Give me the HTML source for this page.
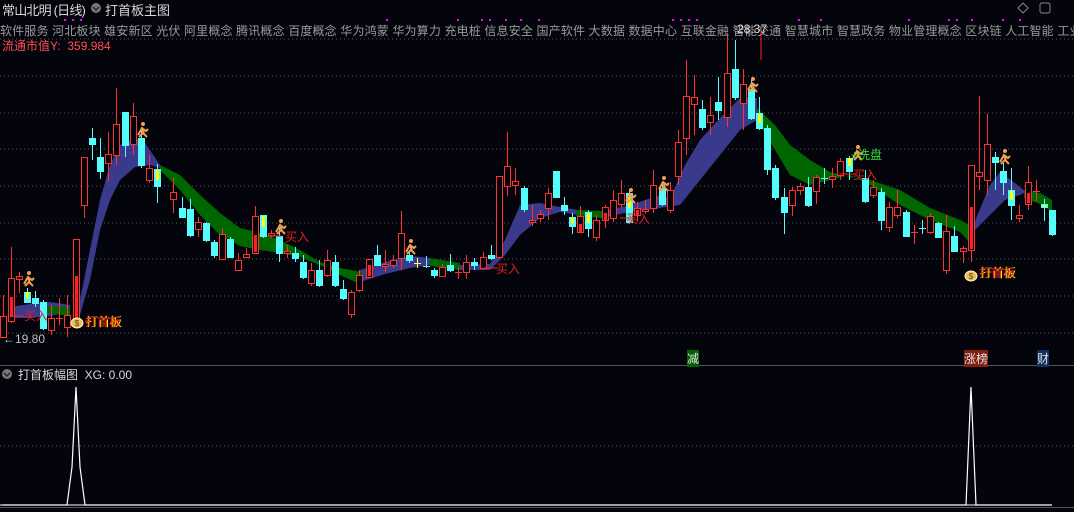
<!DOCTYPE html>
<html><head><meta charset="utf-8"><style>
html,body{margin:0;padding:0;background:#04040d;width:1074px;height:512px;overflow:hidden;font-family:"Liberation Sans","Noto Sans CJK SC",sans-serif}
svg{position:absolute;left:0;top:0}
.t{position:absolute;white-space:nowrap}
.r{stroke:#ff3232;stroke-width:1;fill:#04040d}
.rf{fill:#ff2020}
.c{stroke:#54fcfc;fill:#54fcfc}
.y{fill:#ffff00}
.g{stroke:#555;stroke-width:1;stroke-dasharray:1 3}
</style></head><body>
<svg width="1074" height="512" xmlns="http://www.w3.org/2000/svg">
<g class="g">
<line x1="0" y1="39" x2="1074" y2="39"/><line x1="0" y1="76" x2="1074" y2="76"/><line x1="0" y1="113" x2="1074" y2="113"/><line x1="0" y1="149" x2="1074" y2="149"/><line x1="0" y1="186" x2="1074" y2="186"/><line x1="0" y1="223" x2="1074" y2="223"/><line x1="0" y1="259" x2="1074" y2="259"/><line x1="0" y1="296" x2="1074" y2="296"/><line x1="0" y1="333" x2="1074" y2="333"/><line x1="0" y1="446" x2="1074" y2="446"/>
</g>
<line x1="0" y1="365.5" x2="1074" y2="365.5" stroke="#555"/>
<line x1="0" y1="507.5" x2="1074" y2="507.5" stroke="#555"/>
<g fill="#3a3a8c">
<polygon points="10,307 30,304 50,302 70,305 70,312 50,316 30,318 10,318"/>
<polygon points="75,320 80,300 90,250 100,200 110,165 120,145 135,138 145,143 160,165 160,168 150,165 135,167 120,180 110,200 100,230 90,280 80,315"/>
<polygon points="360,270 385,262 410,256 430,258 430,265 410,268 385,274 360,282"/>
<polygon points="460,265 490,264 505,240 520,205 540,203 560,207 578,210 578,215 560,212 540,218 520,235 505,255 490,270 460,270"/>
<polygon points="600,212 630,205 660,195 670,198 685,165 700,140 720,118 740,98 757,98 757,120 740,130 720,155 700,180 680,205 660,208 630,212 600,218"/>
<polygon points="972,228 990,185 1000,172 1015,183 1026,192 1020,195 1005,200 990,215 975,230"/>
</g>
<g fill="#006600">
<polygon points="47,306 70,307 70,316 47,313"/>
<polygon points="160,165 180,175 200,195 220,213 240,228 260,233 280,240 300,250 320,262 340,268 362,272 362,285 340,275 320,265 300,257 280,253 260,250 240,246 220,235 200,215 180,190 160,170"/>
<polygon points="430,258 460,263 460,270 430,266"/>
<polygon points="576,210 602,211 602,218 576,216"/>
<polygon points="757,108 775,125 790,145 810,160 830,172 850,177 870,180 900,190 930,208 960,220 972,226 972,245 960,232 930,220 900,205 870,185 850,175 830,180 810,185 790,175 775,150 757,120"/>
<polygon points="1024,190 1040,193 1052,200 1052,212 1040,204 1024,198"/>
</g>
<g>
<line class="r" x1="3.5" y1="295" x2="3.5" y2="338"/><rect class="r" x="0.5" y="316.5" width="6" height="21"/>
<line class="r" x1="11.5" y1="247" x2="11.5" y2="323"/><rect class="r" x="8.5" y="278.5" width="6" height="43"/><rect class="rf" x="10" y="297" width="3" height="20"/>
<line class="r" x1="19.5" y1="272" x2="19.5" y2="293"/><rect class="r" x="16.5" y="276.5" width="6" height="3"/>
<line class="c" x1="27.5" y1="288" x2="27.5" y2="303"/><rect class="c" x="24.5" y="292.5" width="6" height="10"/><rect class="y" x="26" y="292" width="3" height="6"/>
<line class="c" x1="35.5" y1="291" x2="35.5" y2="307"/><rect class="c" x="32.5" y="298.5" width="6" height="5"/>
<line class="c" x1="43.5" y1="300" x2="43.5" y2="330"/><rect class="c" x="40.5" y="302.5" width="6" height="26"/>
<line class="r" x1="51.5" y1="305" x2="51.5" y2="335"/><rect class="r" x="48.5" y="318.5" width="6" height="12"/>
<line class="r" x1="59.5" y1="298" x2="59.5" y2="325"/><line class="r" x1="56" y1="318.5" x2="63" y2="318.5"/>
<line class="r" x1="67.5" y1="295" x2="67.5" y2="337"/><rect class="r" x="64.5" y="315.5" width="6" height="12"/>
<rect class="r" x="73.5" y="239.5" width="6" height="83"/><rect class="rf" x="75" y="276" width="3" height="44"/>
<line class="r" x1="84.5" y1="157" x2="84.5" y2="218"/><rect class="r" x="81.5" y="157.5" width="6" height="48"/>
<line class="c" x1="92.5" y1="128" x2="92.5" y2="160"/><rect class="c" x="89.5" y="138.5" width="6" height="6"/>
<line class="c" x1="100.5" y1="138" x2="100.5" y2="179"/><rect class="c" x="97.5" y="157.5" width="6" height="14"/>
<line class="r" x1="108.5" y1="132" x2="108.5" y2="181"/><rect class="r" x="105.5" y="154.5" width="6" height="9"/>
<line class="r" x1="116.5" y1="88" x2="116.5" y2="165"/><rect class="r" x="113.5" y="124.5" width="6" height="31"/>
<line class="c" x1="125.5" y1="112" x2="125.5" y2="157"/><rect class="c" x="122.5" y="112.5" width="6" height="33"/>
<line class="r" x1="133.5" y1="103" x2="133.5" y2="155"/><rect class="r" x="130.5" y="116.5" width="6" height="28"/>
<line class="c" x1="141.5" y1="128" x2="141.5" y2="168"/><rect class="c" x="138.5" y="138.5" width="6" height="27"/>
<line class="r" x1="149.5" y1="155" x2="149.5" y2="183"/><rect class="r" x="146.5" y="168.5" width="6" height="12"/>
<line class="c" x1="157.5" y1="164" x2="157.5" y2="203"/><rect class="c" x="154.5" y="169.5" width="6" height="17"/><rect class="y" x="156" y="170" width="3" height="10"/>
<line class="r" x1="173.5" y1="178" x2="173.5" y2="213"/><rect class="r" x="170.5" y="192.5" width="6" height="7"/>
<line class="c" x1="182.5" y1="197" x2="182.5" y2="217"/><rect class="c" x="179.5" y="208.5" width="6" height="9"/>
<line class="c" x1="190.5" y1="199" x2="190.5" y2="237"/><rect class="c" x="187.5" y="209.5" width="6" height="26"/>
<line class="r" x1="198.5" y1="217" x2="198.5" y2="237"/><rect class="r" x="195.5" y="222.5" width="6" height="7"/>
<line class="c" x1="206.5" y1="222" x2="206.5" y2="242"/><rect class="c" x="203.5" y="223.5" width="6" height="17"/>
<line class="c" x1="214.5" y1="240" x2="214.5" y2="258"/><rect class="c" x="211.5" y="242.5" width="6" height="13"/>
<line class="r" x1="222.5" y1="228" x2="222.5" y2="259"/><rect class="r" x="219.5" y="234.5" width="6" height="25"/>
<line class="c" x1="230.5" y1="237" x2="230.5" y2="258"/><rect class="c" x="227.5" y="239.5" width="6" height="18"/>
<line class="r" x1="238.5" y1="253" x2="238.5" y2="270"/><rect class="r" x="235.5" y="260.5" width="6" height="10"/>
<line class="r" x1="246.5" y1="248" x2="246.5" y2="258"/><rect class="r" x="243.5" y="254.5" width="6" height="3"/>
<line class="r" x1="255.5" y1="206" x2="255.5" y2="254"/><rect class="r" x="252.5" y="216.5" width="6" height="37"/><rect class="rf" x="254" y="235" width="3" height="17"/>
<line class="c" x1="263.5" y1="215" x2="263.5" y2="238"/><rect class="c" x="260.5" y="215.5" width="6" height="21"/><rect class="y" x="262" y="216" width="3" height="11"/>
<line class="r" x1="271.5" y1="230" x2="271.5" y2="238"/><rect class="r" x="268.5" y="233.5" width="6" height="2"/>
<line class="c" x1="279.5" y1="228" x2="279.5" y2="262"/><rect class="c" x="276.5" y="236.5" width="6" height="17"/>
<line class="r" x1="287.5" y1="245" x2="287.5" y2="258"/><rect class="r" x="284.5" y="251.5" width="6" height="2"/>
<line class="c" x1="295.5" y1="247" x2="295.5" y2="262"/><rect class="c" x="292.5" y="253.5" width="6" height="5"/>
<line class="c" x1="303.5" y1="255" x2="303.5" y2="279"/><rect class="c" x="300.5" y="262.5" width="6" height="15"/>
<line class="r" x1="311.5" y1="263" x2="311.5" y2="286"/><rect class="r" x="308.5" y="270.5" width="6" height="13"/>
<line class="c" x1="319.5" y1="260" x2="319.5" y2="287"/><rect class="c" x="316.5" y="270.5" width="6" height="15"/>
<line class="r" x1="327.5" y1="250" x2="327.5" y2="277"/><rect class="r" x="324.5" y="260.5" width="6" height="15"/>
<line class="c" x1="335.5" y1="255" x2="335.5" y2="287"/><rect class="c" x="332.5" y="262.5" width="6" height="23"/>
<line class="c" x1="343.5" y1="280" x2="343.5" y2="300"/><rect class="c" x="340.5" y="289.5" width="6" height="9"/>
<line class="r" x1="351.5" y1="290" x2="351.5" y2="318"/><rect class="r" x="348.5" y="292.5" width="6" height="22"/>
<line class="r" x1="359.5" y1="270" x2="359.5" y2="292"/><rect class="r" x="356.5" y="275.5" width="6" height="15"/>
<line class="r" x1="369.5" y1="259" x2="369.5" y2="277"/><rect class="r" x="366.5" y="259.5" width="6" height="18"/><rect class="rf" x="368" y="265" width="3" height="11"/>
<line class="c" x1="377.5" y1="245" x2="377.5" y2="265"/><rect class="c" x="374.5" y="255.5" width="6" height="10"/>
<line class="r" x1="385.5" y1="250" x2="385.5" y2="272"/><rect class="r" x="382.5" y="264.5" width="6" height="2"/>
<line class="r" x1="393.5" y1="255" x2="393.5" y2="268"/><rect class="r" x="390.5" y="260.5" width="6" height="5"/>
<line class="r" x1="401.5" y1="211" x2="401.5" y2="270"/><rect class="r" x="398.5" y="233.5" width="6" height="25"/>
<line class="c" x1="409.5" y1="250" x2="409.5" y2="263"/><rect class="c" x="406.5" y="255.5" width="6" height="5"/>
<line stroke="#ffff60" x1="417.5" y1="258" x2="417.5" y2="268"/><line stroke="#ffff60" x1="414" y1="263.5" x2="421" y2="263.5"/>
<line class="c" x1="426.5" y1="256" x2="426.5" y2="268"/><line class="c" x1="423" y1="266.5" x2="430" y2="266.5"/>
<line class="c" x1="434.5" y1="268" x2="434.5" y2="278"/><rect class="c" x="431.5" y="270.5" width="6" height="5"/>
<line class="r" x1="442.5" y1="264" x2="442.5" y2="277"/><rect class="r" x="439.5" y="267.5" width="6" height="9"/>
<line class="c" x1="450.5" y1="254" x2="450.5" y2="272"/><rect class="c" x="447.5" y="265.5" width="6" height="5"/>
<line class="r" x1="458.5" y1="267" x2="458.5" y2="279"/><line class="r" x1="455" y1="272.5" x2="462" y2="272.5"/>
<line class="r" x1="466.5" y1="255" x2="466.5" y2="279"/><rect class="r" x="463.5" y="262.5" width="6" height="10"/>
<line class="c" x1="474.5" y1="258" x2="474.5" y2="270"/><rect class="c" x="471.5" y="262.5" width="6" height="3"/>
<line class="r" x1="483.5" y1="252" x2="483.5" y2="270"/><rect class="r" x="480.5" y="257.5" width="6" height="11"/>
<line class="c" x1="491.5" y1="245" x2="491.5" y2="260"/><rect class="c" x="488.5" y="255.5" width="6" height="3"/>
<rect class="r" x="496.5" y="176.5" width="6" height="81"/>
<line class="r" x1="507.5" y1="132" x2="507.5" y2="196"/><rect class="r" x="504.5" y="166.5" width="6" height="20"/>
<line class="r" x1="515.5" y1="168" x2="515.5" y2="195"/><rect class="r" x="512.5" y="181.5" width="6" height="4"/>
<line class="c" x1="524.5" y1="186" x2="524.5" y2="212"/><rect class="c" x="521.5" y="188.5" width="6" height="21"/>
<line class="r" x1="532.5" y1="205" x2="532.5" y2="226"/><rect class="r" x="529.5" y="220.5" width="6" height="2"/>
<line class="r" x1="540.5" y1="210" x2="540.5" y2="222"/><rect class="r" x="537.5" y="214.5" width="6" height="4"/>
<line class="r" x1="548.5" y1="188" x2="548.5" y2="220"/><rect class="r" x="545.5" y="193.5" width="6" height="15"/>
<rect class="c" x="553.5" y="171.5" width="6" height="26"/>
<line class="c" x1="564.5" y1="197" x2="564.5" y2="215"/><rect class="c" x="561.5" y="205.5" width="6" height="5"/>
<line class="c" x1="572.5" y1="213" x2="572.5" y2="234"/><rect class="c" x="569.5" y="217.5" width="6" height="9"/><rect class="y" x="571" y="218" width="3" height="5"/>
<line class="r" x1="580.5" y1="206" x2="580.5" y2="232"/><rect class="r" x="577.5" y="216.5" width="6" height="16"/><rect class="rf" x="579" y="224" width="3" height="8"/>
<line class="c" x1="588.5" y1="210" x2="588.5" y2="237"/><rect class="c" x="585.5" y="212.5" width="6" height="16"/><rect class="y" x="587" y="213" width="3" height="10"/>
<line class="r" x1="596.5" y1="215" x2="596.5" y2="241"/><rect class="r" x="593.5" y="220.5" width="6" height="17"/>
<line class="r" x1="605.5" y1="205" x2="605.5" y2="228"/><rect class="r" x="602.5" y="207.5" width="6" height="13"/><rect class="rf" x="604" y="213" width="3" height="7"/>
<line class="r" x1="613.5" y1="190" x2="613.5" y2="222"/><rect class="r" x="610.5" y="200.5" width="6" height="18"/>
<line class="r" x1="621.5" y1="180" x2="621.5" y2="207"/><rect class="r" x="618.5" y="193.5" width="6" height="11"/>
<line class="c" x1="629.5" y1="190" x2="629.5" y2="224"/><rect class="c" x="626.5" y="193.5" width="6" height="29"/><rect class="y" x="628" y="194" width="3" height="14"/>
<line class="r" x1="637.5" y1="202" x2="637.5" y2="222"/><rect class="r" x="634.5" y="208.5" width="6" height="7"/><rect class="rf" x="636" y="210" width="3" height="5"/>
<line class="r" x1="645.5" y1="200" x2="645.5" y2="214"/><rect class="r" x="642.5" y="209.5" width="6" height="2"/>
<line class="r" x1="653.5" y1="170" x2="653.5" y2="213"/><rect class="r" x="650.5" y="185.5" width="6" height="23"/>
<line class="c" x1="662.5" y1="185" x2="662.5" y2="206"/><rect class="c" x="659.5" y="188.5" width="6" height="16"/>
<line class="r" x1="670.5" y1="182" x2="670.5" y2="213"/><rect class="r" x="667.5" y="190.5" width="6" height="20"/>
<line class="r" x1="678.5" y1="130" x2="678.5" y2="185"/><rect class="r" x="675.5" y="142.5" width="6" height="34"/>
<line class="r" x1="686.5" y1="60" x2="686.5" y2="155"/><rect class="r" x="683.5" y="96.5" width="6" height="42"/>
<line class="r" x1="694.5" y1="75" x2="694.5" y2="135"/><rect class="r" x="691.5" y="97.5" width="6" height="7"/>
<line class="c" x1="702.5" y1="100" x2="702.5" y2="130"/><rect class="c" x="699.5" y="109.5" width="6" height="18"/>
<line class="r" x1="710.5" y1="97" x2="710.5" y2="135"/><rect class="r" x="707.5" y="115.5" width="6" height="7"/>
<line class="c" x1="718.5" y1="77" x2="718.5" y2="120"/><rect class="c" x="715.5" y="102.5" width="6" height="8"/>
<line class="r" x1="727.5" y1="35" x2="727.5" y2="127"/><rect class="r" x="724.5" y="73.5" width="6" height="44"/>
<line class="c" x1="735.5" y1="40" x2="735.5" y2="100"/><rect class="c" x="732.5" y="69.5" width="6" height="28"/>
<line class="r" x1="743.5" y1="69" x2="743.5" y2="130"/><rect class="r" x="740.5" y="84.5" width="6" height="19"/>
<line class="c" x1="751.5" y1="80" x2="751.5" y2="120"/><rect class="c" x="748.5" y="89.5" width="6" height="29"/>
<line class="c" x1="759.5" y1="97" x2="759.5" y2="130"/><rect class="c" x="756.5" y="113.5" width="6" height="15"/><rect class="y" x="758" y="114" width="3" height="9"/>
<line class="c" x1="767.5" y1="125" x2="767.5" y2="175"/><rect class="c" x="764.5" y="128.5" width="6" height="41"/>
<line class="c" x1="775.5" y1="165" x2="775.5" y2="200"/><rect class="c" x="772.5" y="168.5" width="6" height="29"/>
<line class="c" x1="784.5" y1="188" x2="784.5" y2="234"/><rect class="c" x="781.5" y="197.5" width="6" height="15"/>
<line class="r" x1="792.5" y1="187" x2="792.5" y2="216"/><rect class="r" x="789.5" y="190.5" width="6" height="15"/>
<line class="r" x1="800.5" y1="183" x2="800.5" y2="195"/><rect class="r" x="797.5" y="186.5" width="6" height="4"/>
<line class="c" x1="808.5" y1="177" x2="808.5" y2="207"/><rect class="c" x="805.5" y="187.5" width="6" height="18"/>
<line class="r" x1="816.5" y1="175" x2="816.5" y2="204"/><rect class="r" x="813.5" y="177.5" width="6" height="14"/>
<line class="c" x1="824.5" y1="168" x2="824.5" y2="184"/><line class="c" x1="821" y1="178.5" x2="828" y2="178.5"/>
<line class="r" x1="832.5" y1="168" x2="832.5" y2="188"/><rect class="r" x="829.5" y="176.5" width="6" height="3"/>
<line class="r" x1="840.5" y1="158" x2="840.5" y2="180"/><rect class="r" x="837.5" y="161.5" width="6" height="14"/>
<line class="c" x1="849.5" y1="156" x2="849.5" y2="180"/><rect class="c" x="846.5" y="158.5" width="6" height="13"/><rect class="y" x="848" y="158" width="3" height="8"/>
<line class="c" x1="865.5" y1="170" x2="865.5" y2="203"/><rect class="c" x="862.5" y="178.5" width="6" height="23"/>
<line class="r" x1="873.5" y1="180" x2="873.5" y2="198"/><rect class="r" x="870.5" y="187.5" width="6" height="8"/>
<line class="c" x1="881.5" y1="188" x2="881.5" y2="230"/><rect class="c" x="878.5" y="192.5" width="6" height="28"/>
<line class="r" x1="889.5" y1="202" x2="889.5" y2="232"/><rect class="r" x="886.5" y="207.5" width="6" height="20"/>
<line class="r" x1="897.5" y1="190" x2="897.5" y2="218"/><rect class="r" x="894.5" y="207.5" width="6" height="8"/>
<line class="c" x1="906.5" y1="210" x2="906.5" y2="237"/><rect class="c" x="903.5" y="212.5" width="6" height="24"/>
<line class="r" x1="914.5" y1="225" x2="914.5" y2="244"/><line class="r" x1="911" y1="232.5" x2="918" y2="232.5"/>
<line class="c" x1="922.5" y1="220" x2="922.5" y2="234"/><line class="c" x1="919" y1="228.5" x2="926" y2="228.5"/>
<line class="r" x1="930.5" y1="213" x2="930.5" y2="234"/><rect class="r" x="927.5" y="216.5" width="6" height="16"/>
<line class="c" x1="938.5" y1="222" x2="938.5" y2="238"/><rect class="c" x="935.5" y="223.5" width="6" height="14"/>
<line class="r" x1="946.5" y1="215" x2="946.5" y2="274"/><rect class="r" x="943.5" y="231.5" width="6" height="39"/>
<line class="c" x1="954.5" y1="226" x2="954.5" y2="252"/><rect class="c" x="951.5" y="236.5" width="6" height="15"/>
<line class="r" x1="963.5" y1="246" x2="963.5" y2="263"/><rect class="r" x="960.5" y="248.5" width="6" height="3"/>
<line class="r" x1="971.5" y1="165" x2="971.5" y2="262"/><rect class="r" x="968.5" y="165.5" width="6" height="85"/><rect class="rf" x="970" y="207" width="3" height="42"/>
<line class="r" x1="979.5" y1="96" x2="979.5" y2="190"/><rect class="r" x="976.5" y="172.5" width="6" height="4"/>
<line class="r" x1="987.5" y1="114" x2="987.5" y2="195"/><rect class="r" x="984.5" y="144.5" width="6" height="36"/>
<line class="c" x1="995.5" y1="152" x2="995.5" y2="190"/><rect class="c" x="992.5" y="157.5" width="6" height="5"/>
<line class="c" x1="1003.5" y1="163" x2="1003.5" y2="195"/><rect class="c" x="1000.5" y="171.5" width="6" height="11"/>
<line class="c" x1="1011.5" y1="168" x2="1011.5" y2="220"/><rect class="c" x="1008.5" y="190.5" width="6" height="15"/><rect class="y" x="1010" y="191" width="3" height="9"/>
<line class="r" x1="1019.5" y1="205" x2="1019.5" y2="222"/><rect class="r" x="1016.5" y="215.5" width="6" height="3"/>
<line class="r" x1="1028.5" y1="166" x2="1028.5" y2="210"/><rect class="r" x="1025.5" y="182.5" width="6" height="22"/><rect class="rf" x="1027" y="193" width="3" height="10"/>
<line class="r" x1="1036.5" y1="180" x2="1036.5" y2="201"/><line class="r" x1="1033" y1="191.5" x2="1040" y2="191.5"/>
<line class="c" x1="1044.5" y1="199" x2="1044.5" y2="221"/><rect class="c" x="1041.5" y="204.5" width="6" height="3"/><rect class="y" x="1043" y="205" width="3" height="2"/>
<line class="c" x1="1052.5" y1="210" x2="1052.5" y2="236"/><rect class="c" x="1049.5" y="210.5" width="6" height="24"/>
</g>
<g fill="#f0a050">
<g transform="translate(28,280)"><circle cx="1" cy="-7" r="2"/><path d="M-4 4 L0 -3 L4 0 L6 -2 M0 -3 L2 3 L5 6 M1 2 L-3 6" stroke="#f0a050" stroke-width="2" fill="none"/></g>
<g transform="translate(142,131)"><circle cx="1" cy="-7" r="2"/><path d="M-4 4 L0 -3 L4 0 L6 -2 M0 -3 L2 3 L5 6 M1 2 L-3 6" stroke="#f0a050" stroke-width="2" fill="none"/></g>
<g transform="translate(280,228)"><circle cx="1" cy="-7" r="2"/><path d="M-4 4 L0 -3 L4 0 L6 -2 M0 -3 L2 3 L5 6 M1 2 L-3 6" stroke="#f0a050" stroke-width="2" fill="none"/></g>
<g transform="translate(410,248)"><circle cx="1" cy="-7" r="2"/><path d="M-4 4 L0 -3 L4 0 L6 -2 M0 -3 L2 3 L5 6 M1 2 L-3 6" stroke="#f0a050" stroke-width="2" fill="none"/></g>
<g transform="translate(630,197)"><circle cx="1" cy="-7" r="2"/><path d="M-4 4 L0 -3 L4 0 L6 -2 M0 -3 L2 3 L5 6 M1 2 L-3 6" stroke="#f0a050" stroke-width="2" fill="none"/></g>
<g transform="translate(663,185)"><circle cx="1" cy="-7" r="2"/><path d="M-4 4 L0 -3 L4 0 L6 -2 M0 -3 L2 3 L5 6 M1 2 L-3 6" stroke="#f0a050" stroke-width="2" fill="none"/></g>
<g transform="translate(752,86)"><circle cx="1" cy="-7" r="2"/><path d="M-4 4 L0 -3 L4 0 L6 -2 M0 -3 L2 3 L5 6 M1 2 L-3 6" stroke="#f0a050" stroke-width="2" fill="none"/></g>
<g transform="translate(857,154)"><circle cx="1" cy="-7" r="2"/><path d="M-4 4 L0 -3 L4 0 L6 -2 M0 -3 L2 3 L5 6 M1 2 L-3 6" stroke="#f0a050" stroke-width="2" fill="none"/></g>
<g transform="translate(1004,158)"><circle cx="1" cy="-7" r="2"/><path d="M-4 4 L0 -3 L4 0 L6 -2 M0 -3 L2 3 L5 6 M1 2 L-3 6" stroke="#f0a050" stroke-width="2" fill="none"/></g>
</g>
<g><ellipse cx="77" cy="323" rx="6" ry="5" fill="#e8c060" stroke="#fff4b0"/><text x="77" y="326" font-size="8" text-anchor="middle" fill="#604000" font-family="Liberation Sans">$</text>
<ellipse cx="971" cy="276" rx="6" ry="5" fill="#e8c060" stroke="#fff4b0"/><text x="971" y="279" font-size="8" text-anchor="middle" fill="#604000" font-family="Liberation Sans">$</text></g>
<g stroke="#ff2020"><line x1="12" y1="316" x2="24" y2="316"/><line x1="268" y1="236" x2="282" y2="236"/><line x1="484" y1="268" x2="497" y2="268"/><line x1="620" y1="218" x2="635" y2="218"/><line x1="840" y1="174" x2="857" y2="174"/><line x1="985" y1="272" x2="995" y2="272"/><line x1="85" y1="321" x2="92" y2="321"/></g>
<polyline points="3,505 67,505 72,467 76,387 80,467 85,505 939,505 966,505 971,387 976,505 1052,505" fill="none" stroke="#fff" stroke-width="1.2"/>
<line x1="0" y1="505" x2="1052" y2="505" stroke="#fff"/>
<path d="M1023 3 L1028 8 L1023 13 L1018 8 Z" fill="none" stroke="#888"/>
<rect x="1040" y="3" width="10" height="10" rx="2" fill="none" stroke="#888"/>
<circle cx="96" cy="8" r="5" fill="#777"/><path d="M93 7 L96 10 L99 7" stroke="#222" fill="none" stroke-width="1.3"/>
<circle cx="7" cy="374" r="5" fill="#777"/><path d="M4 373 L7 376 L10 373" stroke="#222" fill="none" stroke-width="1.3"/>
<g fill="#ff00ff"><rect x="64" y="19" width="2" height="2"/><rect x="72" y="19" width="2" height="2"/><rect x="80" y="19" width="2" height="2"/><rect x="386" y="19" width="2" height="2"/><rect x="457" y="19" width="2" height="2"/><rect x="481" y="19" width="2" height="2"/><rect x="489" y="19" width="2" height="2"/><rect x="505" y="19" width="2" height="2"/><rect x="520" y="19" width="2" height="2"/><rect x="538" y="19" width="2" height="2"/><rect x="672" y="19" width="2" height="2"/><rect x="680" y="19" width="2" height="2"/><rect x="688" y="19" width="2" height="2"/><rect x="696" y="19" width="2" height="2"/><rect x="798" y="19" width="2" height="2"/><rect x="820" y="19" width="2" height="2"/><rect x="908" y="19" width="2" height="2"/><rect x="948" y="19" width="2" height="2"/><rect x="956" y="19" width="2" height="2"/><rect x="971" y="19" width="2" height="2"/><rect x="1002" y="19" width="2" height="2"/><rect x="1019" y="19" width="2" height="2"/></g>
<line x1="761" y1="27" x2="761" y2="60" stroke="#ff2020"/>
</svg>
<div class="t" style="left:2px;top:0px;font-size:13px;color:#d8d8d8;letter-spacing:-0.8px">常山北明 (日线)</div>
<div class="t" style="left:105px;top:0px;font-size:13px;color:#d8d8d8">打首板主图</div>
<div class="t" style="left:0px;top:22px;font-size:12px;color:#9a9a9a;letter-spacing:0.15px">软件服务 河北板块 雄安新区 光伏 阿里概念 腾讯概念 百度概念 华为鸿蒙 华为算力 充电桩 信息安全 国产软件 大数据 数据中心 互联金融 智能交通 智慧城市 智慧政务 物业管理概念 区块链 人工智能 工业</div>
<div class="t" style="left:737px;top:22px;font-size:12px;color:#d8d8d8">28.37</div>
<div class="t" style="left:2px;top:37px;font-size:12px;color:#ff5050">流通市值Y:&nbsp;&nbsp;359.984</div>
<div class="t" style="left:3px;top:332px;font-size:12px;color:#c0c0c0">←19.80</div>
<div class="t" style="left:18px;top:366px;font-size:12px;color:#d8d8d8">打首板幅图&nbsp; XG: 0.00</div>
<div class="t" style="left:24px;top:307px;font-size:12px;color:#e02020">买入</div>
<div class="t" style="left:285px;top:228px;font-size:12px;color:#e02020">买入</div>
<div class="t" style="left:496px;top:260px;font-size:12px;color:#e02020">买入</div>
<div class="t" style="left:626px;top:210px;font-size:12px;color:#e02020">买入</div>
<div class="t" style="left:853px;top:166px;font-size:12px;color:#e02020">买入</div>
<div class="t" style="left:85px;top:313px;font-size:12px;color:#ff2020;text-shadow:1px 0 #ffff00">打首板</div>
<div class="t" style="left:979px;top:264px;font-size:12px;color:#ff2020;text-shadow:1px 0 #ffff00">打首板</div>
<div class="t" style="left:851px;top:146px;font-size:12px;color:#30e030">+洗盘</div>
<div class="t" style="left:687px;top:350px;font-size:12px;color:#e0e0e0;background:#006000">减</div>
<div class="t" style="left:964px;top:350px;font-size:12px;color:#e0e0e0;background:#802010">涨榜</div>
<div class="t" style="left:1037px;top:350px;font-size:12px;color:#e0e0e0;background:#103060">财</div>
</body></html>
